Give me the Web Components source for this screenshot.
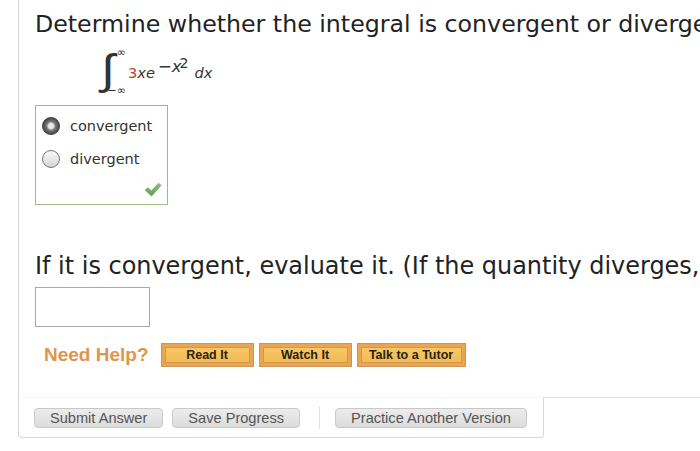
<!DOCTYPE html>
<html>
<head>
<meta charset="utf-8">
<title>Question</title>
<style>
    html, body { margin: 0; padding: 0; background: #fff; overflow: hidden; }
    body { width: 700px; height: 451px; font-family: "DejaVu Sans", sans-serif; }
</style>
</head>
<body>
<question-page>
    <prompt-text>Determine whether the integral is convergent or diverge</prompt-text>
    <integral-expr></integral-expr>
    <choice-box>
        <radio-option checked>convergent</radio-option>
        <radio-option>divergent</radio-option>
    </choice-box>
    <prompt-text class="second">If it is convergent, evaluate it. (If the quantity diverges,</prompt-text>
    <answer-input></answer-input>
    <help-bar>
        <help-button>Read It</help-button>
        <help-button>Watch It</help-button>
        <help-button wide>Talk to a Tutor</help-button>
    </help-bar>
    <action-bar slot="footer">
        <action-button>Submit Answer</action-button>
        <action-button>Save Progress</action-button>
        <action-button slot="after">Practice Another Version</action-button>
    </action-bar>
</question-page>

<script>
class QuestionPage extends HTMLElement {
    constructor() {
        super();
        this.attachShadow({ mode: 'open' });
        this.shadowRoot.innerHTML = `
            <style>
                :host { display: block; width: 700px; height: 451px; overflow: hidden; }
                .body {
                    margin-left: 18px;
                    border-left: 1px solid #d4d4d4;
                    padding-left: 16px;
                    height: 397px;
                    box-sizing: border-box;
                    overflow: hidden;
                    white-space: nowrap;
                }
            </style>
            <div class="body"><slot></slot></div>
            <slot name="footer"></slot>
        `;
    }
}

class PromptText extends HTMLElement {
    constructor() {
        super();
        this.attachShadow({ mode: 'open' });
        this.shadowRoot.innerHTML = `
            <style>
                :host { display: block; font: 23.7px/28px "DejaVu Sans", sans-serif; color: #222; padding-top: 10px; width: 760px; }
                :host(.second) { padding-top: 47px; font-size: 23.95px; }
            </style>
            <slot></slot>
        `;
    }
}

class IntegralExpr extends HTMLElement {
    constructor() {
        super();
        this.attachShadow({ mode: 'open' });
        this.shadowRoot.innerHTML = `
            <style>
                :host { display: flex; align-items: center; height: 58px; margin-left: 66px; margin-top: 5px; color: #333; font-family: "DejaVu Sans", sans-serif; }
                .sign { font: 200 42px/58px "DejaVu Sans", sans-serif; color: #333; width: 6px; flex: none; display: block; margin-bottom: 4px; transform: scaleX(1.2); transform-origin: left center; }
                .limits { display: flex; flex-direction: column; justify-content: space-between; align-items: flex-end; height: 50px; font-size: 11px; line-height: 12px; width: 19px; flex: none; margin-right: 2px; }
                .body { font-size: 14.6px; line-height: 18px; margin-top: 2px; white-space: nowrap; }
                .three { color: #c0392b; }
                i { font-style: oblique; }
                sup { font-size: 16.5px; line-height: 0; position: relative; top: -6px; vertical-align: baseline; margin-left: 3px; }
                sup b { font-weight: normal; font-size: 14px; position: relative; top: -4px; margin-left: -2px; }
                .dx { font-size: 14.6px; font-style: oblique; margin: 2px 0 0 6px; line-height: 18px; }
            </style>
            <span class="sign">∫</span>
            <span class="limits"><span>∞</span><span>−∞</span></span>
            <span class="body"><span class="three">3</span><i>xe</i><sup>−<i>x</i><b>2</b></sup></span>
            <span class="dx">dx</span>
        `;
    }
}

class ChoiceBox extends HTMLElement {
    constructor() {
        super();
        this.attachShadow({ mode: 'open' });
        this.shadowRoot.innerHTML = `
            <style>
                :host { display: block; width: 131px; height: 95px; border: 1px solid #9dbb85; margin-top: 4px; padding-top: 3px; position: relative; }
                svg { position: absolute; right: 5px; bottom: 7px; }
            </style>
            <slot></slot>
            <svg width="18" height="15" viewBox="0 0 18 15">
                <defs>
                    <linearGradient id="tick" x1="0" y1="0" x2="0" y2="1">
                        <stop offset="0" stop-color="#8cc47a"/>
                        <stop offset="1" stop-color="#5f9f58"/>
                    </linearGradient>
                </defs>
                <path d="M0.5 8 L4 5.2 L7.4 8.4 L14.5 0.8 L17.6 3.2 L7.6 14.4 Z" fill="url(#tick)"/>
            </svg>
        `;
    }
}

class RadioOption extends HTMLElement {
    constructor() {
        super();
        this.attachShadow({ mode: 'open' });
        const on = this.hasAttribute('checked');
        this.shadowRoot.innerHTML = `
            <style>
                :host { display: flex; align-items: center; height: 33px; padding-left: 6px; gap: 10px; font: 14.5px "DejaVu Sans", sans-serif; color: #333; }
                .dot { width: 18px; height: 18px; border-radius: 50%; box-sizing: border-box; flex: none; }
                .off { border: 1px solid #777; background: linear-gradient(#fafafa, #d5d5d5); }
                .on { border: 1px solid #3a3a3a; background: radial-gradient(circle at 50% 50%, #e8e8e8 0 2.5px, #777 4.5px, #4a4a4a 8px); }
                .label { padding-top: 1px; }
            </style>
            <span class="dot ${on ? 'on' : 'off'}"></span>
            <span class="label"><slot></slot></span>
        `;
    }
}

class AnswerInput extends HTMLElement {
    constructor() {
        super();
        this.attachShadow({ mode: 'open' });
        this.shadowRoot.innerHTML = `
            <style>
                :host { display: block; width: 115px; height: 40px; margin-top: 7px; }
                input { display: block; width: 100%; height: 100%; box-sizing: border-box; border: 1px solid #a8a8a8; background: #fff; padding: 0; outline: none; }
            </style>
            <input type="text" aria-label="answer">
        `;
    }
}

class HelpBar extends HTMLElement {
    constructor() {
        super();
        this.attachShadow({ mode: 'open' });
        this.shadowRoot.innerHTML = `
            <style>
                :host { display: flex; align-items: center; gap: 5px; margin-top: 15px; height: 26px; margin-left: 9px; }
                .label { font: bold 19px "Liberation Sans", sans-serif; color: #e0954f; margin-right: 7px; }
            </style>
            <span class="label">Need Help?</span>
            <slot></slot>
        `;
    }
}

class HelpButton extends HTMLElement {
    constructor() {
        super();
        this.attachShadow({ mode: 'open' });
        this.shadowRoot.innerHTML = `
            <style>
                :host { display: block; width: 93px; height: 24px; box-sizing: border-box; border: 1px solid #c9965e; background: #e9a552; padding: 3px; }
                :host([wide]) { width: 109px; }
                .inner { display: flex; align-items: center; justify-content: center; height: 100%; background: linear-gradient(#f6c866, #f2bb55); border: 1px solid #d9964a; box-sizing: border-box; font: bold 12.5px "Liberation Sans", sans-serif; color: #2a2310; }
            </style>
            <div class="inner"><slot></slot></div>
        `;
    }
}

class ActionBar extends HTMLElement {
    constructor() {
        super();
        this.attachShadow({ mode: 'open' });
        this.shadowRoot.innerHTML = `
            <style>
                :host { display: flex; height: 41px; }
                .bar {
                    margin-left: 18px;
                    width: 526px;
                    box-sizing: border-box;
                    border: 1px solid #d8d8d8;
                    border-top: 1px solid #f6f6f6;
                    border-radius: 0 0 4px 4px;
                    display: flex;
                    align-items: center;
                    gap: 9px;
                    padding: 0 0 0 15px;
                }
                .rule { flex: 1; border-top: 1px solid #ddd; height: 0; }
                .sep { width: 1px; height: 23px; background: #e2e2e2; margin: 0 6px 0 10px; }
            </style>
            <div class="bar">
                <slot></slot>
                <span class="sep"></span>
                <slot name="after"></slot>
            </div>
            <div class="rule"></div>
        `;
    }
}

class ActionButton extends HTMLElement {
    constructor() {
        super();
        this.attachShadow({ mode: 'open' });
        this.shadowRoot.innerHTML = `
            <style>
                :host { display: inline-flex; align-items: center; justify-content: center; height: 20px; padding: 0 15px; box-sizing: border-box; border: 1px solid #c8c8c8; border-radius: 4px; background: linear-gradient(#ececec, #dcdcdc); font: 14.6px "Liberation Sans", sans-serif; color: #555; }
            </style>
            <slot></slot>
        `;
    }
}

customElements.define('question-page', QuestionPage);
customElements.define('prompt-text', PromptText);
customElements.define('integral-expr', IntegralExpr);
customElements.define('choice-box', ChoiceBox);
customElements.define('radio-option', RadioOption);
customElements.define('answer-input', AnswerInput);
customElements.define('help-bar', HelpBar);
customElements.define('help-button', HelpButton);
customElements.define('action-bar', ActionBar);
customElements.define('action-button', ActionButton);
</script>
</body>
</html>
